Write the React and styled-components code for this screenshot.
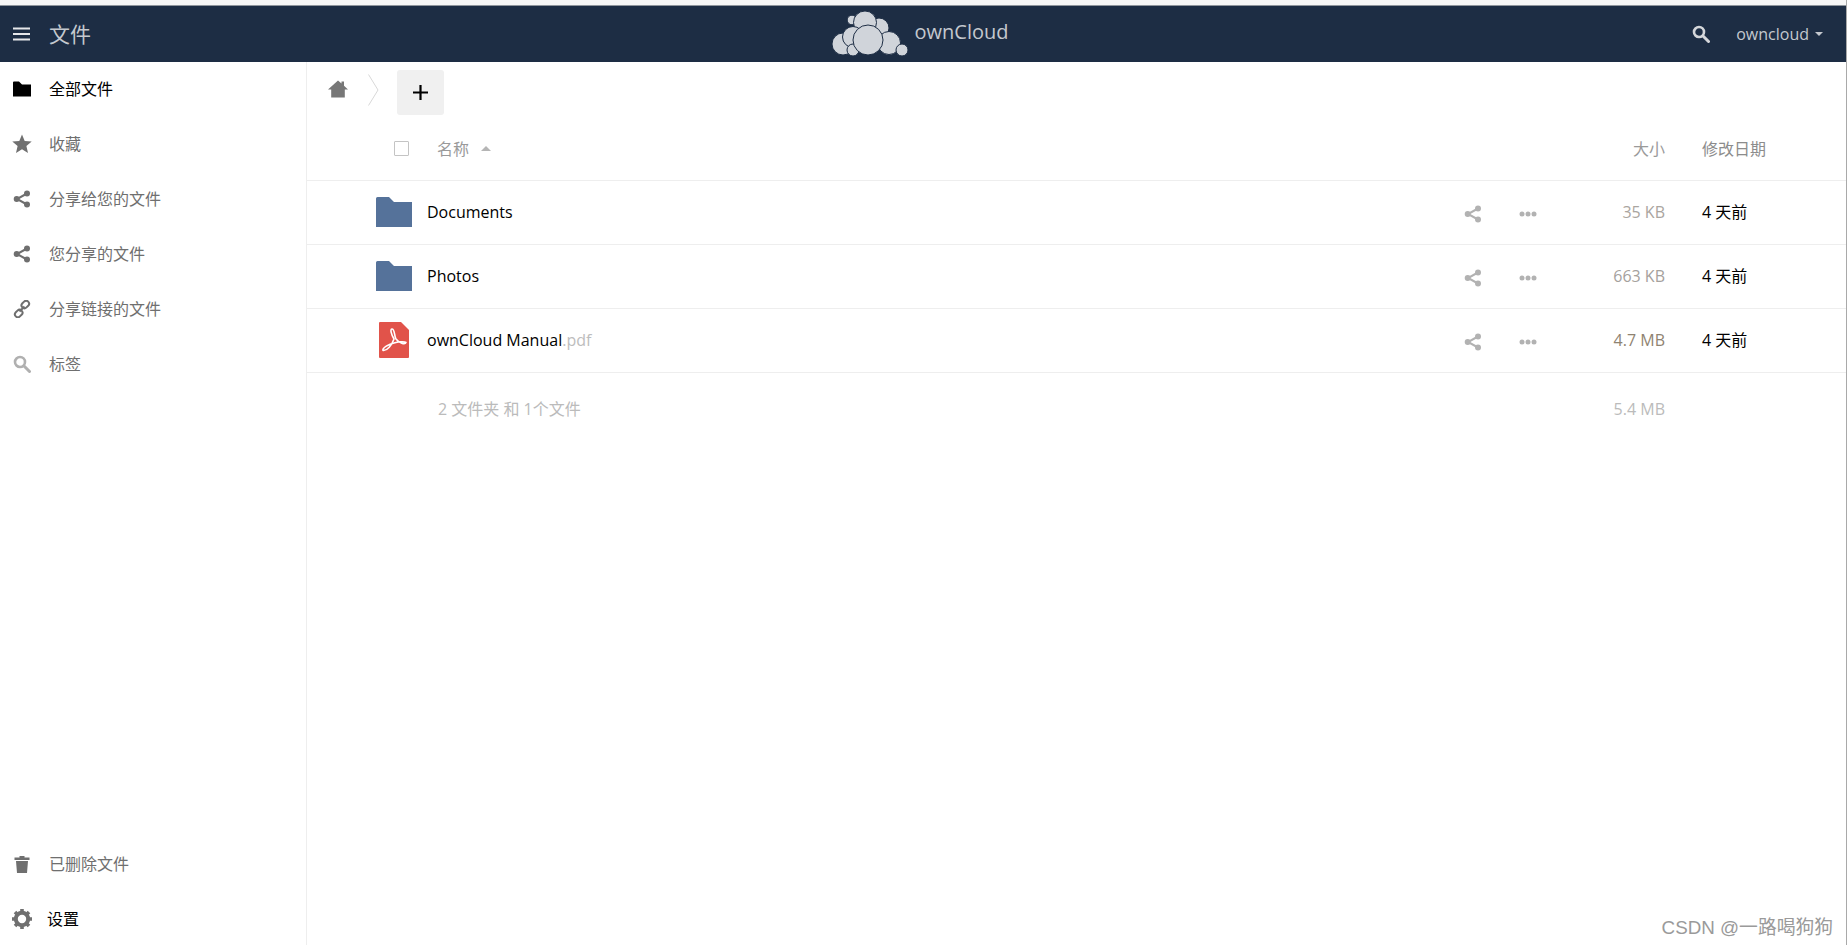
import React from "react";
import styled, { createGlobalStyle } from "styled-components";

const Global = createGlobalStyle`
  html, body { margin: 0; padding: 0; height: 100%; background: #fff; }
  body { font-family: "Open Sans", "Noto Sans CJK SC", sans-serif; font-size: 16px; line-height: 22px; color: #000; overflow: hidden; }
  #root { height: 100%; }
`;

const Page = styled.div`
  position: relative;
  height: 945px;
  display: flex;
  flex-direction: column;
  border-right: 1px solid #a9a9a9;
  box-sizing: border-box;
  overflow: hidden;
`;
const TopStrip = styled.div`
  height: 5px;
  background: #f6f6f6;
  border-bottom: 1px solid #8f959c;
  flex: none;
`;
const Header = styled.header`
  height: 56px;
  flex: none;
  background: #1d2d44;
  display: grid;
  grid-template-columns: 1fr auto 1fr;
  align-items: center;
  color: #d4d6da;
`;
const HeaderLeft = styled.div`
  display: flex;
  align-items: center;
  padding-left: 13px;
`;
const AppName = styled.span`
  margin-left: 18px;
  font-size: 21px;
  color: #c4c8ce;
`;
const Brand = styled.div`
  display: flex;
  align-items: center;
  margin-left: -6px;
  margin-top: -1px;
`;
const BrandName = styled.span`
  font-size: 20px;
  margin-left: 7px;
  margin-top: -3px;
  color: #c4c8ce;
`;
const HeaderRight = styled.div`
  display: flex;
  justify-content: flex-end;
  align-items: center;
  padding-right: 23px;
`;
const User = styled.span`
  margin-left: 26px;
  font-size: 16px;
  color: #c4c8ce;
  display: flex;
  align-items: center;
`;
const Caret = styled.i`
  margin-left: 6px;
  width: 0;
  height: 0;
  border: 4.5px solid transparent;
  border-top-color: #c4c8ce;
  border-bottom: 0;
`;
const Body = styled.div`
  flex: 1;
  display: flex;
  min-height: 0;
`;
const Side = styled.nav`
  width: 307px;
  flex: none;
  box-sizing: border-box;
  border-right: 1px solid #eeeeee;
  display: flex;
  flex-direction: column;
  justify-content: space-between;
`;
const NavGroup = styled.div`
  display: flex;
  flex-direction: column;
  margin-top: ${(p) => p.$top || 0}px;
  margin-bottom: ${(p) => p.$bottom || 0}px;
`;
const NavItem = styled.div`
  height: 55px;
  display: flex;
  align-items: center;
  padding-left: 12px;
  font-size: 16px;
  color: ${(p) => (p.$active ? "#000" : "#6f6f6f")};
`;
const NavIcon = styled.span`
  width: 20px;
  height: 20px;
  display: flex;
  align-items: center;
  justify-content: center;
  margin-right: ${(p) => p.$gap || 17}px;
`;
const Main = styled.main`
  flex: 1;
  min-width: 0;
  display: flex;
  flex-direction: column;
`;
const Crumbs = styled.div`
  height: 60px;
  flex: none;
  display: flex;
  align-items: center;
  padding: 0 0 0 21px;
`;
const HomeLink = styled.span`
  display: flex;
  margin-bottom: 6px;
`;
const Chevron = styled.span`
  margin: 0 18px 4px 20px;
  display: flex;
`;
const AddButton = styled.button`
  width: 47px;
  height: 45px;
  border: 0;
  border-radius: 3px;
  background: #f0f0f0;
  padding: 0;
  display: flex;
  align-items: center;
  justify-content: center;
`;
const TableHead = styled.div`
  height: 59px;
  flex: none;
  display: flex;
  align-items: center;
  color: #9a9a9a;
  border-bottom: 1px solid #eeeeee;
  font-size: 16px;
  padding-bottom: 5px;
  box-sizing: border-box;
`;
const Check = styled.i`
  width: 13px;
  height: 13px;
  border: 1px solid #c4c4c4;
  border-radius: 1px;
  margin-left: 87px;
  flex: none;
`;
const HeadName = styled.span`
  margin-left: 28px;
  display: flex;
  align-items: center;
  flex: 1;
`;
const SortCaret = styled.i`
  margin-left: 12px;
  width: 0;
  height: 0;
  border: 5px solid transparent;
  border-bottom-color: #b5b5b5;
  border-top: 0;
`;
const SizeCell = styled.span`
  width: ${(p) => p.$width || 120}px;
  text-align: right;
  flex: none;
  color: ${(p) => p.$color || "#9a9a9a"};
`;
const DateCell = styled.span`
  width: 181px;
  box-sizing: border-box;
  padding-left: 37px;
  flex: none;
  color: ${(p) => p.$color || "#000"};
`;
const Row = styled.div`
  height: 64px;
  flex: none;
  box-sizing: border-box;
  border-bottom: 1px solid #eeeeee;
  display: flex;
  align-items: center;
  padding-bottom: 2px;
`;
const FileIcon = styled.span`
  margin-left: 69px;
  width: 36px;
  height: 36px;
  display: flex;
  align-items: center;
  justify-content: center;
  flex: none;
`;
const FileName = styled.span`
  margin-left: 15px;
  flex: 1;
`;
const Ext = styled.span`
  color: #bdbdbd;
`;
const Action = styled.span`
  width: 18px;
  height: 18px;
  display: flex;
  align-items: center;
  justify-content: center;
  margin-left: ${(p) => p.$gap}px;
  margin-top: 4px;
`;
const Summary = styled.div`
  height: 72px;
  display: flex;
  align-items: center;
  color: #bbbbbb;
  font-size: 16px;
`;
const SummaryText = styled.span`
  margin-left: 131px;
  flex: 1;
`;
const Mark = styled.div`
  position: absolute;
  right: 13px;
  bottom: 6px;
  font-family: "Liberation Sans", "Noto Sans CJK SC", sans-serif;
  font-size: 18.8px;
  color: #9a9a9a;
`;

const Menu = () => (
  <svg width="18" height="14" viewBox="0 0 18 14"><path d="M0 1.5h17M0 7h17M0 12.5h17" stroke="#e6e7ea" strokeWidth="2" /></svg>
);
const Search = ({ c = "#d4d6da", s = 18 }) => (
  <svg width={s} height={s} viewBox="0 0 18 18"><circle cx="7" cy="7" r="5" fill="none" stroke={c} strokeWidth="2.6" /><path d="M10.8 10.8L16.5 16.5" stroke={c} strokeWidth="3" strokeLinecap="round" /></svg>
);
const Logo = () => (
  <svg width="76" height="46" viewBox="0 0 76 46">
    <g fill="#d0d4da" stroke="#1d2d44" strokeWidth="1">
      <circle cx="20" cy="9" r="4.8" />
      <circle cx="47" cy="17" r="10" />
      <circle cx="33" cy="11.500" r="11.500" />
      <circle cx="11" cy="33" r="11" />
      <circle cx="21" cy="26" r="10.500" />
      <circle cx="57" cy="32" r="11.500" />
      <circle cx="70" cy="39" r="6" />
      <circle cx="21" cy="39" r="6" />
      <circle cx="36" cy="29" r="15" />
    </g>
  </svg>
);
const Share = ({ c = "#6f6f6f", s = 18 }) => (
  <svg width={s} height={s} viewBox="0 0 18 18">
    <path d="M14 3.5L4 9l10 5.5" fill="none" stroke={c} strokeWidth="2" />
    <circle cx="14" cy="3.5" r="3" fill={c} /><circle cx="3.7" cy="9" r="3" fill={c} /><circle cx="14" cy="14.5" r="3" fill={c} />
  </svg>
);
const Star = () => (
  <svg width="20" height="20" viewBox="0 0 20 20"><path d="M10 .5l2.7 6.4 7 .6-5.3 4.5 1.600 6.900L10 15.300 4 18.900l1.600-6.900L.3 7.500l7-.6z" fill="#707070" /></svg>
);
const SolidFolder = () => (
  <svg width="18" height="16" viewBox="0 0 18 16"><path d="M0 1.500A1 1 0 011 .5h5l3 3h9v12H0z" fill="#000" /></svg>
);
const LinkIcon = () => (
  <svg width="18" height="18" viewBox="0 0 18 18" fill="none" stroke="#6f6f6f" strokeWidth="2">
    <rect x="8.200" y="1.600" width="8.200" height="5.800" rx="2.900" transform="rotate(-45 12.300 4.500)" />
    <rect x="1.600" y="10.600" width="8.200" height="5.800" rx="2.900" transform="rotate(-45 5.700 13.500)" />
    <path d="M6.500 11.500l5-5" />
  </svg>
);
const Trash = () => (
  <svg width="16" height="18" viewBox="0 0 16 18" fill="#6f6f6f"><path d="M.5 2.500h5V1h5v1.500h5V5H.5zM2 6h12l-1 12H3z" /></svg>
);
const Gear = () => (
  <svg width="20" height="20" viewBox="0 0 20 20">
    <circle cx="10" cy="10" r="6.200" fill="none" stroke="#707070" strokeWidth="4" />
    <path d="M10 0v20M0 10h20M3 3l14 14M17 3L3 17" stroke="#707070" strokeWidth="3.600" strokeDasharray="3.400 13.200 3.400" />
  </svg>
);
const Home = () => (
  <svg width="20" height="18" viewBox="0 0 20 18"><path d="M10 .5L13.500 3.500V1.500h2.500v4.200L20 9.500H16.800V17.500H3.200V9.500H0z" fill="#777" /></svg>
);
const Crumb = () => (
  <svg width="11" height="32" viewBox="0 0 11 32"><path d="M.5.5L10 16 .5 31.500" fill="none" stroke="#d8d8d8" /></svg>
);
const Plus = () => (
  <svg width="17" height="17" viewBox="0 0 17 17"><path d="M8.500 1v15M1 8.500h15" stroke="#000" strokeWidth="2.200" /></svg>
);
const Folder = () => (
  <svg width="36" height="30" viewBox="0 0 36 30"><path d="M0 1.500A1.500 1.500 0 011.500 0H13l5 5h18v25H0z" fill="#55729a" /></svg>
);
const Pdf = () => (
  <svg width="30" height="36" viewBox="0 0 30 36">
    <path d="M1 0h21l8 8v27a1 1 0 01-1 1H1a1 1 0 01-1-1V1a1 1 0 011-1z" fill="#e1534a" />
    <path d="M13 7C11 7 12 12 15 17 13 23 8 29 4 28.500 3 26 10 22 15 21 18 20 25 19 27 20.500 26 23 20 21 17 17 15 14 16 7 13 7z" fill="none" stroke="#fff" strokeWidth="1.600" strokeLinejoin="round" />
  </svg>
);
const Dots = () => (
  <svg width="18" height="6" viewBox="0 0 18 6" fill="#b2b2b2"><circle cx="3" cy="3" r="2.500" /><circle cx="9" cy="3" r="2.500" /><circle cx="15" cy="3" r="2.500" /></svg>
);

const nav = [
  { label: "全部文件", icon: <SolidFolder />, active: true },
  { label: "收藏", icon: <Star /> },
  { label: "分享给您的文件", icon: <Share /> },
  { label: "您分享的文件", icon: <Share /> },
  { label: "分享链接的文件", icon: <LinkIcon /> },
  { label: "标签", icon: <Search c="#b0b0b0" /> },
];
const files = [
  { name: "Documents", icon: <Folder />, size: "35 KB", color: "#aaa5a0" },
  { name: "Photos", icon: <Folder />, size: "663 KB", color: "#a5a19d" },
  { name: "ownCloud Manual", ext: ".pdf", icon: <Pdf />, size: "4.7 MB", color: "#8f8372" },
];

export default function App() {
  return (
    <Page>
      <Global />
      <TopStrip />
      <Header>
        <HeaderLeft>
          <Menu />
          <AppName>文件</AppName>
        </HeaderLeft>
        <Brand>
          <Logo />
          <BrandName>ownCloud</BrandName>
        </Brand>
        <HeaderRight>
          <Search />
          <User>owncloud<Caret /></User>
        </HeaderRight>
      </Header>
      <Body>
        <Side>
          <NavGroup $top={-1}>
            {nav.map((n) => (
              <NavItem key={n.label} $active={n.active}>
                <NavIcon>{n.icon}</NavIcon>
                {n.label}
              </NavItem>
            ))}
          </NavGroup>
          <NavGroup $bottom={-1}>
            <NavItem><NavIcon><Trash /></NavIcon>已删除文件</NavItem>
            <NavItem $active><NavIcon $gap={15}><Gear /></NavIcon>设置</NavItem>
          </NavGroup>
        </Side>
        <Main>
          <Crumbs>
            <HomeLink><Home /></HomeLink>
            <Chevron><Crumb /></Chevron>
            <AddButton><Plus /></AddButton>
          </Crumbs>
          <TableHead>
            <Check />
            <HeadName>名称<SortCaret /></HeadName>
            <SizeCell>大小</SizeCell>
            <DateCell $color="#8c8c8c">修改日期</DateCell>
          </TableHead>
          {files.map((f) => (
            <Row key={f.name}>
              <FileIcon>{f.icon}</FileIcon>
              <FileName>{f.name}{f.ext && <Ext>{f.ext}</Ext>}</FileName>
              <Action $gap={0}><Share c="#b2b2b2" /></Action>
              <Action $gap={37}><Dots /></Action>
              <SizeCell $color={f.color} $width={128}>{f.size}</SizeCell>
              <DateCell>4 天前</DateCell>
            </Row>
          ))}
          <Summary>
            <SummaryText>2 文件夹 和 1个文件</SummaryText>
            <SizeCell $color="#bbbbbb">5.4 MB</SizeCell>
            <DateCell />
          </Summary>
        </Main>
      </Body>
      <Mark>CSDN @一路喝狗狗</Mark>
    </Page>
  );
}
